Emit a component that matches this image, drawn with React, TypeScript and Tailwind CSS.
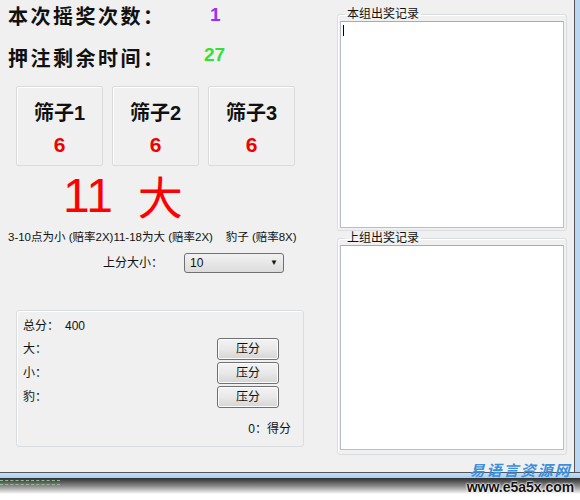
import React from "react";

const font = {
  fontFamily: '"Liberation Sans", "Noto Sans CJK SC", sans-serif',
};

const Dice: React.FC<{ label: string; value: number }> = ({ label, value }) => (
  <div className="flex h-[80px] w-[87px] flex-col items-center rounded-[2px] border border-[#dadada] pt-[14px] shadow-[inset_1px_1px_0_#fff]">
    <div className="h-[24px] text-[20px] leading-[24px] font-bold text-[#111]">{label}</div>
    <div className="mt-[8px] h-[24px] text-[21px] leading-[24px] font-bold text-[#ee0000]">{value}</div>
  </div>
);

const PushButton: React.FC = () => (
  <button className="h-[22px] w-[62px] rounded-[3px] border border-[#707070] bg-gradient-to-b from-[#f3f3f3] via-[#e9e9e9] to-[#d5d5d5] text-[12px] leading-[20px] text-[#111] shadow-[inset_0_0_0_1px_#fcfcfc]">
    压分
  </button>
);

const Group: React.FC<{ title: string; boxH: string; className?: string; children?: React.ReactNode }> = ({
  title,
  boxH,
  className,
  children,
}) => (
  <fieldset className={`w-[230px] rounded-[3px] border border-[#d9dde0] px-[2px] shadow-[inset_1px_1px_0_#fff] ${className ?? ""}`}>
    <legend className="ml-[5px] px-[2px] text-[12px] leading-[12px] text-[#111]">{title}</legend>
    <div className={`mt-[1px] w-[224px] border border-[#b4c0cb] border-t-[#a3adb7] bg-white ${boxH}`}>{children}</div>
  </fieldset>
);

export default function App() {
  return (
    <div className="relative flex h-[500px] w-[580px] flex-col bg-white" style={font}>
      <div className="flex h-[472px]">
        <div className="flex w-[574px] bg-[#f0f0f0]">
          {/* left side */}
          <div className="flex w-[330px] flex-col pt-[5px]">
            <div className="flex h-[24px] items-center pl-[8px]">
              <span className="w-[202px] text-[20px] leading-[24px] font-bold tracking-[2.5px] text-[#111]">本次摇奖次数：</span>
              <span className="mb-[4px] text-[19px] font-bold text-[#9a30f0]">1</span>
            </div>
            <div className="mt-[18px] flex h-[24px] items-center pl-[8px]">
              <span className="w-[196px] text-[20px] leading-[24px] font-bold tracking-[2.5px] text-[#111]">押注剩余时间：</span>
              <span className="mb-[8px] text-[19px] font-bold text-[#33e033]">27</span>
            </div>

            <div className="mt-[15px] flex gap-[9px] pl-[16px]">
              <Dice label="筛子1" value={6} />
              <Dice label="筛子2" value={6} />
              <Dice label="筛子3" value={6} />
            </div>

            <div className="mt-[6px] flex h-[48px] items-center pl-[63px] text-[#ff0000]">
              <span className="text-[48px] leading-[48px]">11</span>
              <span className="ml-[25px] text-[45px] leading-[48px]" style={{ fontFamily: '"Noto Sans CJK SC", sans-serif' }}>
                大
              </span>
            </div>

            <div className="mt-[9px] h-[16px] pl-[8px] text-[11.5px] leading-[16px] whitespace-nowrap text-[#111]">
              3-10点为小 (赔率2X)11-18为大 (赔率2X)&nbsp;&nbsp;&nbsp; 豹子 (赔率8X)
            </div>

            <div className="mt-[8px] flex h-[20px] items-center pl-[103px]">
              <span className="w-[81px] text-[12px] text-[#111]">上分大小：</span>
              <div className="flex h-[20px] w-[100px] items-center justify-between rounded-[3px] border border-[#707070] bg-gradient-to-b from-[#f2f2f2] to-[#dcdcdc] pr-[5px] pl-[5px] text-[12px] text-[#111]">
                <span>10</span>
                <span className="text-[8px]">▼</span>
              </div>
            </div>

            <div className="mt-[37px] ml-[16px] flex h-[137px] w-[288px] flex-col rounded-[3px] border border-[#d9dde0] shadow-[inset_1px_1px_0_#fff]">
              <div className="mt-[7px] flex h-[16px] items-center pl-[6px] text-[12px] text-[#111]">
                <span>总分：</span>
                <span className="ml-[6px]">400</span>
              </div>
              <div className="mt-[3px] flex flex-col">
                {["大：", "小：", "豹："].map((t) => (
                  <div key={t} className="flex h-[24px] items-center">
                    <span className="w-[200px] pl-[6px] text-[12px] text-[#111]">{t}</span>
                    <PushButton />
                  </div>
                ))}
              </div>
              <div className="mt-[12px] flex h-[16px] items-center justify-end pr-[12px] text-[12px] text-[#111]">
                0：得分
              </div>
            </div>
          </div>

          {/* right side */}
          <div className="ml-[7px] flex flex-col pt-[8px]">
            <Group title="本组出奖记录" boxH="h-[207px]" className="pb-[2px]">
              <div className="mt-[3px] ml-[2px] h-[11px] w-px bg-black" />
            </Group>
            <Group title="上组出奖记录" boxH="h-[205px]" className="mt-[1px] pb-[4px]" />
          </div>
        </div>
        <div className="w-px bg-[#555]" />
        <div className="w-[5px] bg-[#b9d7f5]" />
      </div>
      <div className="h-px bg-[#555]" />
      <div className="h-[5px] bg-gradient-to-b from-[#c3def8] to-[#a9cff2]" />
      <div className="relative h-[16px] bg-gradient-to-b from-[#2f2f2f] via-[#8a8a8a] to-white">
        <div className="mt-[2px] h-[5px] w-[60px] border-y border-dashed border-[#8fc08f]" />
      </div>

      {/* watermark */}
      <div className="absolute top-[460px] left-[467px] flex w-[107px] flex-col items-center">
        <span
          className="text-[15px] leading-[19px] font-bold tracking-[2px] text-[#3b8fdc] italic"
          style={{ fontFamily: '"Noto Sans CJK SC", sans-serif' }}
        >
          易语言资源网
        </span>
        <span className="text-[14px] leading-[17px] font-bold text-[#111] [text-shadow:0_0_2px_#fff,0_0_2px_#fff,0_0_2px_#fff]">
          www.e5a5x.com
        </span>
      </div>
    </div>
  );
}
